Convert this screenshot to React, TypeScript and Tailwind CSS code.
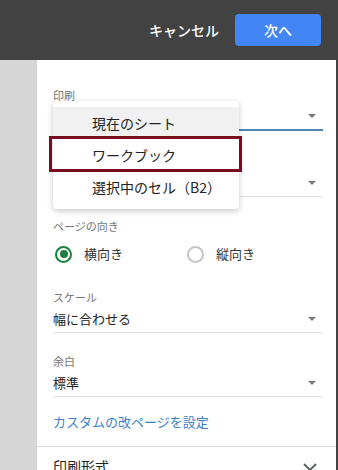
const font = { fontFamily: '"Noto Sans CJK JP", "Noto Sans", sans-serif' };

const Caret = () => (
  <svg width="8" height="4" viewBox="0 0 8 4" className="mr-[7px]">
    <path d="M0 0h8L4 4z" fill="#7a7a7a" />
  </svg>
);

interface FieldProps {
  label: string;
  value: string;
  focused?: boolean;
  className?: string;
}

const SelectField = ({ label, value, focused, className }: FieldProps) => (
  <div className={className}>
    <div className="h-[16px] text-[11px] leading-[16px] text-[#757575]">{label}</div>
    <div
      className={`flex h-[28px] items-center justify-between ${
        focused ? 'border-b-2 border-[#4f86b9]' : 'border-b border-[#e0e0e0]'
      }`}
    >
      <span className="text-[13px] text-[#222]">{value}</span>
      <Caret />
    </div>
  </div>
);

const Radio = ({ checked, label }: { checked?: boolean; label: string }) => (
  <div className="flex items-center gap-[12px]">
    <span
      className={`flex h-[17px] w-[17px] items-center justify-center rounded-full border-2 ${
        checked ? 'border-[#1b7f3d]' : 'border-[#c4c4c4]'
      }`}
    >
      {checked && <span className="h-[8px] w-[8px] rounded-full bg-[#1b7f3d]" />}
    </span>
    <span className="text-[13px] text-[#333]">{label}</span>
  </div>
);

export default function App() {
  return (
    <div className="flex h-[470px] w-[338px] flex-col overflow-hidden bg-white" style={font}>
      <header className="flex h-[60px] shrink-0 items-center justify-end gap-[16px] bg-[#424242] pr-[17px]">
        <span className="text-[14px] font-medium text-white">キャンセル</span>
        <button className="h-[32px] w-[86px] rounded-[4px] bg-[#4285f4] text-[14px] font-medium text-white">
          次へ
        </button>
      </header>

      <div className="flex flex-1">
        <div className="w-[37px] shrink-0 bg-[#d6d6d6]" />

        <div className="relative flex flex-1 flex-col border-r-2 border-[#424242]">
          <div className="flex flex-col pl-[16px] pr-[13px] pt-[27px]">
            {/* fields under the open menu: their values are hidden */}
            <SelectField label="印刷" value="" focused />
            <SelectField label="" value="" className="mt-[22px]" />

            <div className="mt-[21px] h-[16px] text-[11px] leading-[16px] text-[#757575]">ページの向き</div>
            <div className="mt-[8px] flex h-[24px] items-center">
              <div className="w-[134px] pl-[2px]">
                <Radio checked label="横向き" />
              </div>
              <Radio label="縦向き" />
            </div>

            <SelectField label="スケール" value="幅に合わせる" className="mt-[23px]" />
            <SelectField label="余白" value="標準" className="mt-[20px]" />

            <a className="mt-[15px] h-[20px] text-[13px] leading-[20px] text-[#3d7fc7]">
              カスタムの改ページを設定
            </a>
          </div>

          <div className="mt-[14px] flex h-[40px] shrink-0 items-center justify-between border-t border-[#dadada] pl-[16px] pr-[19px]">
            <span className="text-[14px] text-[#222]">印刷形式</span>
            <svg width="14" height="8" viewBox="0 0 14 8">
              <path d="M1 1l6 6 6-6" fill="none" stroke="#5f6368" strokeWidth="2" />
            </svg>
          </div>

          {/* dropdown menu over the fields */}
          <div className="absolute left-[16px] top-[41px] w-[186px] rounded-[4px] bg-white py-[6px] shadow-[0_2px_6px_rgba(0,0,0,0.22)]">
            <div className="flex h-[32px] items-center bg-[#f1f1f1] pl-[39px] text-[14px] text-[#222]">現在のシート</div>
            <div className="flex h-[32px] items-center pl-[39px] text-[14px] text-[#222]">ワークブック</div>
            <div className="flex h-[32px] items-center pl-[39px] text-[14px] text-[#222]">選択中のセル（B2）</div>
          </div>

          {/* annotation box */}
          <div className="absolute left-[12px] top-[76px] h-[36px] w-[193px] border-[3px] border-[#7a0c21]" />
        </div>
      </div>
    </div>
  );
}
